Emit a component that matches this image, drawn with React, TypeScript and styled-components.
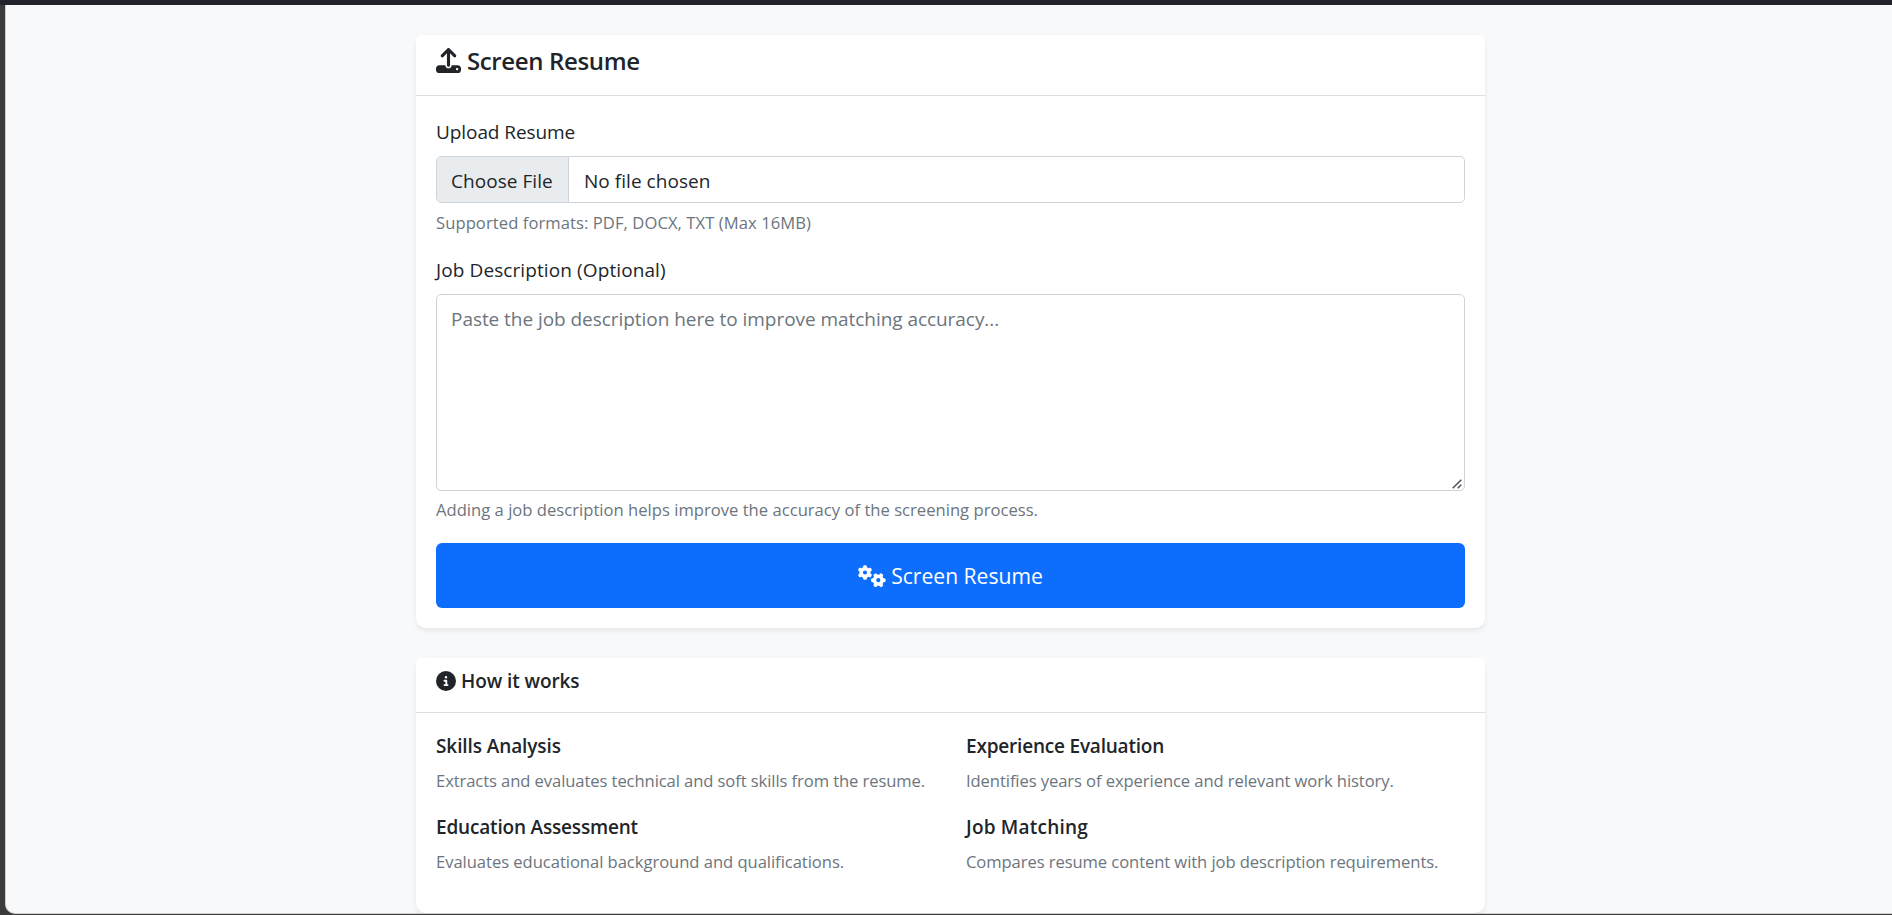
import React from "react";
import styled, { createGlobalStyle } from "styled-components";
import { FaUpload, FaGears, FaCircleInfo } from "react-icons/fa6";

const GlobalStyle = createGlobalStyle`
  *, *::before, *::after { box-sizing: border-box; }
  body {
    margin: 0;
    background: #3b3b3c;
    color: #212529;
    font-family: "Segoe UI", "Open Sans", "Noto Sans", sans-serif;
    font-size: 19px;
    line-height: 30px;
    overflow: hidden;
  }
`;

const Window = styled.div`
  display: flex;
  flex-direction: column;
  height: 915px;
  padding: 0 0 1px 5px;
`;

const TopBar = styled.div`
  flex: none;
  height: 5px;
  margin-left: -5px;
  background: #212529;
`;

const Page = styled.main`
  flex: 1;
  min-height: 0;
  display: flex;
  flex-direction: column;
  gap: 30px;
  padding: 30px 407px 0 410px;
  background: #f8f9fa;
  border-left: 1px solid #cfcfd0;
  border-bottom: 1px solid #cfcfd0;
  border-bottom-left-radius: 10px;
  overflow: hidden;
`;

const Card = styled.section<{ $height: number }>`
  flex: none;
  height: ${(p) => p.$height}px;
  background: #fff;
  border-radius: 10px;
  box-shadow: 0 2.5px 5px rgba(0, 0, 0, 0.075);
`;

const CardHeader = styled.header<{ $height: number }>`
  height: ${(p) => p.$height}px;
  padding: 10px 20px;
  background: #fff;
  border-bottom: 1px solid #dedfe0;
  border-radius: 5px 5px 0 0;
`;

const Heading = styled.h5<{ $size: number; $line: number; $gap: number }>`
  display: flex;
  align-items: center;
  gap: ${(p) => p.$gap}px;
  margin: 0;
  font-size: ${(p) => p.$size}px;
  font-weight: 600;
  line-height: ${(p) => p.$line}px;
  white-space: nowrap;
  svg { flex: none; }
`;

const CardBody = styled.div`
  padding: 20px;
`;

const Text = styled.span<{ $track?: number }>`
  letter-spacing: ${(p) => p.$track ?? 0}px;
  white-space: nowrap;
`;

const Field = styled.div<{ $after: number }>`
  display: flex;
  flex-direction: column;
  margin-bottom: ${(p) => p.$after}px;
`;

const Label = styled.label`
  height: 30px;
  margin-bottom: 10px;
  line-height: 32px;
`;

const FilePicker = styled.div`
  display: flex;
  height: 47px;
  border: 1px solid #ced4da;
  border-radius: 5px;
  line-height: 48px;
  overflow: hidden;
`;

const FileButton = styled.span`
  width: 132px;
  padding-left: 14px;
  background: #e9ecef;
  border-right: 1px solid #ced4da;
`;

const FileName = styled.span`
  padding-left: 15px;
`;

const DescriptionBox = styled.div`
  position: relative;
  height: 197px;
`;

const DescriptionArea = styled.textarea`
  display: block;
  width: 100%;
  height: 100%;
  padding: 9px 14px;
  border: 1px solid #ced4da;
  border-radius: 5px;
  background: #fff;
  font: inherit;
  letter-spacing: -0.05px;
  resize: none;
  &::placeholder { color: #6c757d; opacity: 1; }
`;

const ResizeGrip = styled.svg`
  position: absolute;
  right: 3px;
  bottom: 2px;
  pointer-events: none;
`;

const Hint = styled.div<{ $top: number }>`
  height: ${(p) => 32 - p.$top}px;
  margin-top: ${(p) => p.$top}px;
  color: #6c757d;
  font-size: 16.6px;
  line-height: 27px;
`;

const SubmitButton = styled.button`
  display: flex;
  align-items: center;
  justify-content: center;
  gap: 5px;
  width: 100%;
  height: 65px;
  padding: 0;
  border: 0;
  border-radius: 6px;
  background: #0d6efd;
  color: #fff;
  font: inherit;
  font-size: 21.1px;
`;

const Features = styled.div`
  display: grid;
  grid-template-columns: 530px 1fr;
  row-gap: 20px;
`;

const FeatureTitle = styled.h6`
  margin: 0 0 8px;
  font-size: 19px;
  font-weight: 600;
  line-height: 26px;
`;

const FeatureText = styled.p`
  margin: 0;
  color: #6c757d;
  font-size: 16.6px;
  line-height: 27px;
`;

const features = [
  { title: "Skills Analysis", titleTrack: -0.1, text: "Extracts and evaluates technical and soft skills from the resume.", textTrack: -0.09 },
  { title: "Experience Evaluation", titleTrack: -0.2, text: "Identifies years of experience and relevant work history.", textTrack: -0.085 },
  { title: "Education Assessment", titleTrack: -0.18, text: "Evaluates educational background and qualifications.", textTrack: -0.045 },
  { title: "Job Matching", titleTrack: 0.2, text: "Compares resume content with job description requirements.", textTrack: -0.085 },
];

export default function App() {
  return (
    <>
      <GlobalStyle />
      <Window>
        <TopBar />
        <Page>
          <Card $height={593}>
            <CardHeader $height={61}>
              <Heading $size={24} $line={31} $gap={6}>
                <FaUpload size={25} />
                <Text $track={-0.37}>Screen Resume</Text>
              </Heading>
            </CardHeader>
            <CardBody>
              <Field $after={19}>
                <Label><Text $track={-0.08}>Upload Resume</Text></Label>
                <FilePicker>
                  <FileButton><Text $track={0.05}>Choose File</Text></FileButton>
                  <FileName><Text $track={0.04}>No file chosen</Text></FileName>
                </FilePicker>
                <Hint $top={6}><Text $track={0.07}>Supported formats: PDF, DOCX, TXT (Max 16MB)</Text></Hint>
              </Field>
              <Field $after={20}>
                <Label htmlFor="description"><Text $track={0.1}>Job Description (Optional)</Text></Label>
                <DescriptionBox>
                  <DescriptionArea id="description" placeholder="Paste the job description here to improve matching accuracy..." />
                  <ResizeGrip width="10" height="10" viewBox="0 0 10 10" stroke="#505155" strokeWidth="1.5">
                    <path d="M0.7 9.3L9.3 0.7M5.7 9.3L9.3 5.7" />
                  </ResizeGrip>
                </DescriptionBox>
                <Hint $top={5}><Text $track={0.015}>Adding a job description helps improve the accuracy of the screening process.</Text></Hint>
              </Field>
              <SubmitButton type="button">
                <FaGears size={28} />
                <Text>Screen Resume</Text>
              </SubmitButton>
            </CardBody>
          </Card>
          <Card $height={255}>
            <CardHeader $height={55}>
              <Heading $size={19} $line={26} $gap={5}>
                <FaCircleInfo size={20} />
                <Text $track={-0.08}>How it works</Text>
              </Heading>
            </CardHeader>
            <CardBody>
              <Features>
                {features.map((f) => (
                  <div key={f.title}>
                    <FeatureTitle><Text $track={f.titleTrack}>{f.title}</Text></FeatureTitle>
                    <FeatureText><Text $track={f.textTrack}>{f.text}</Text></FeatureText>
                  </div>
                ))}
              </Features>
            </CardBody>
          </Card>
        </Page>
      </Window>
    </>
  );
}
